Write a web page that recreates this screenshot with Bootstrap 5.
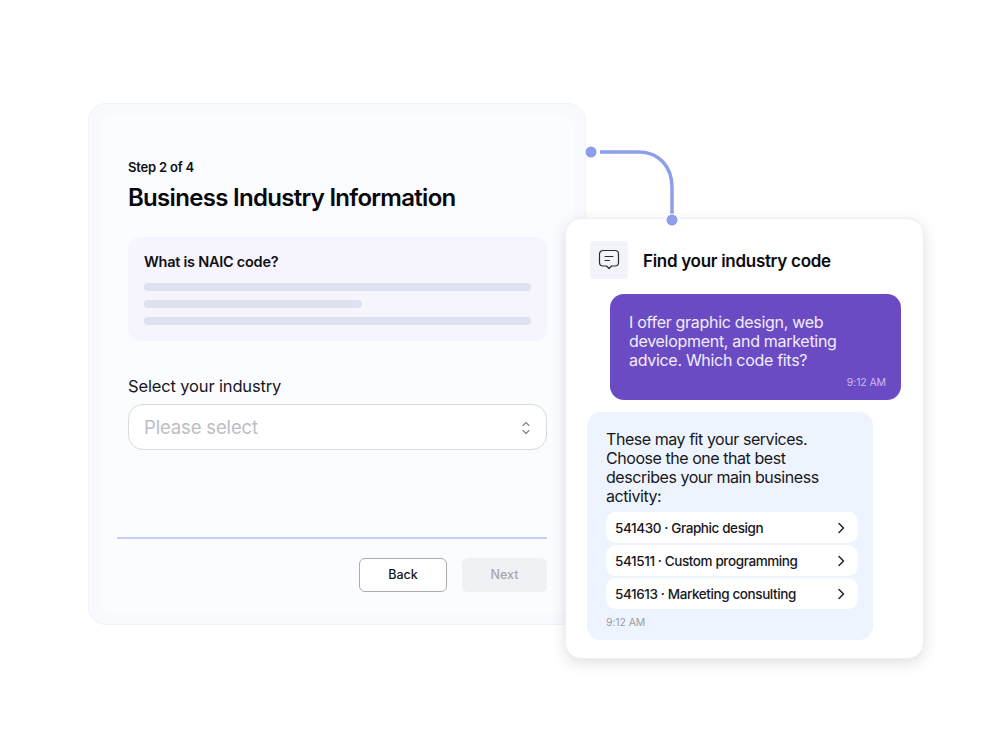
<!DOCTYPE html>
<html lang="en">
<head>
<meta charset="utf-8">
<title>Business Industry Information</title>
<link rel="stylesheet" href="https://cdn.jsdelivr.net/npm/bootstrap@5.3.0/dist/css/bootstrap.min.css">
<style>
html,body{height:749px;overflow:hidden;background:#fff}
body{font-family:Inter,"Noto Sans",sans-serif;color:#101014;padding:103px 0 0 88px}
.stage{position:relative;width:836px;height:555px}
.form-shell{width:498px;height:522px;background:#f9fafe;border:1px solid #f2f3f9;border-radius:18px;padding:11px}
.form-inner{height:498px;background:#fbfcff;border-radius:14px;padding:42px 27px 0 29px;display:flex;flex-direction:column}
.step-label{font-size:13px;font-weight:600;line-height:20px;letter-spacing:-.2px;margin:0 0 5px -1px}
.form-title{font-size:24px;font-weight:600;line-height:32px;letter-spacing:-.7px;margin:0 0 23px -1px;color:#08080c}
.info-box{height:104px;margin-left:-1px;background:#f6f5fd;border-radius:12px;padding:15px 16px}
.info-title{font-size:14.5px;font-weight:600;line-height:20px;letter-spacing:-.25px;margin-bottom:11px}
.skel{height:8px;border-radius:4px;background:#dde1f0;margin-bottom:9px}
.skel-short{width:218px}
.field-label{font-size:16.5px;line-height:24px;letter-spacing:-.15px;margin:33px 0 6px -1px;color:#17171c}
.select-box{height:46px;margin-left:-1px;background:#fff;border:1px solid #d9dade;border-radius:15px;padding:1px 15px 0 15px;font-size:18.5px;color:#bcbdc4;letter-spacing:-.15px}
.select-text{padding-top:1px}
.rule-line{height:2px;background:#c9cef3;margin:87px 0 19px -12px}
.action-row{column-gap:15px}
.btn-back,.btn-next{height:34px;width:88px;font-size:12.5px;font-weight:500;padding:1px 0 0;border-radius:6px}
.btn-back{border:1px solid #a9abb0;background:#fff;color:#17171c}
.btn-next{width:85px;border:0;background:#f0f1f5;color:#a6a8ae}
.connector{position:absolute;left:496px;top:40px}
.conn-end{position:absolute;left:99px;top:-6px}
.chat-win{position:absolute;left:477px;top:115px;width:359px;height:441px;background:#fff;border:1px solid #eceef8;border-radius:16px;box-shadow:0 4px 14px rgba(60,64,90,.16);padding:22px 22px 0 21px}
.chat-icon{width:38px;height:38px;margin-left:3px;background:#f2f3fb;border-radius:4px}
.chat-title{font-size:17px;font-weight:600;letter-spacing:-.3px;color:#0c0c10;margin-left:15px;padding-top:4px}
.bubble-out{width:291px;height:106px;margin:15px 0 12px 23px;background:#6b4bc4;border-radius:14px;color:#f1edfb;padding:19px 15px 0 19px;font-size:16px;line-height:19px;letter-spacing:-.3px}
.stamp-out{font-size:10.5px;line-height:14px;text-align:right;color:#c9bcec;margin-top:6px;letter-spacing:-.1px}
.bubble-in{width:286px;height:228px;background:#eef4fd;border-radius:14px;padding:18px 15px 0 19px;font-size:16px;line-height:19px;letter-spacing:-.45px;color:#17171c}
.opt-row{height:31px;background:#fff;border-radius:10px;padding:1px 13px 0 9px;font-size:13.5px;font-weight:500;letter-spacing:-.4px;margin-bottom:2px}
.opt-list{margin-top:6px}
.stamp-in{font-size:10.5px;line-height:14px;color:#9a9ca6;margin-top:7px;letter-spacing:-.1px}
</style>
</head>
<body>
<main class="stage">
  <section class="form-shell">
    <div class="form-inner">
      <p class="step-label">Step 2 of 4</p>
      <h1 class="form-title">Business Industry Information</h1>
      <div class="info-box">
        <div class="info-title">What is NAIC code?</div>
        <div class="skel"></div>
        <div class="skel skel-short"></div>
        <div class="skel"></div>
      </div>
      <div class="field-label">Select your industry</div>
      <div class="select-box d-flex align-items-center justify-content-between">
        <span class="select-text">Please select</span>
        <svg width="10" height="14" viewBox="0 0 10 14" fill="none" stroke="#85878e" stroke-width="1.200" stroke-linecap="round" stroke-linejoin="round"><path d="M2 4.500 5 1.500 8 4.500M2 9.500 5 12.500 8 9.500"/></svg>
      </div>
      <div class="rule-line"></div>
      <div class="d-flex justify-content-end action-row">
        <button type="button" class="btn btn-back">Back</button>
        <button type="button" class="btn btn-next">Next</button>
      </div>
    </div>
  </section>

  <svg class="connector" width="100" height="90" viewBox="0 0 100 90" fill="none">
    <path d="M16 9H55C75 9 88 24 88 44V72" stroke="#8d9eea" stroke-width="3.500"/>
    <circle cx="7" cy="9" r="6.500" fill="#fff"/>
    <circle cx="7" cy="9" r="5.500" fill="#8d9eea"/>
  </svg>

  <section class="chat-win">
    <div class="d-flex align-items-center">
      <div class="chat-icon d-flex align-items-center justify-content-center">
        <svg width="22" height="22" viewBox="0 0 22 22" fill="none" stroke="#2b2c33" stroke-width="1.200" stroke-linecap="round" stroke-linejoin="round"><path d="M5 1.500H17A3.500 3.500 0 0 1 20.500 5V13.500A3.500 3.500 0 0 1 17 17H13.500L11 19.500 8.500 17H5A3.500 3.500 0 0 1 1.500 13.500V5A3.500 3.500 0 0 1 5 1.500Z"/><path d="M7 7.500H15M7 11.500H11.500"/></svg>
      </div>
      <div class="chat-title">Find your industry code</div>
    </div>
    <div class="bubble-out">
      I offer graphic design, web development, and marketing advice. Which code fits?
      <div class="stamp-out">9:12 AM</div>
    </div>
    <div class="bubble-in">
      These may fit your services. Choose the one that best describes your main business activity:
      <div class="opt-list">
        <div class="opt-row d-flex align-items-center justify-content-between"><span>541430 · Graphic design</span><svg width="8" height="12" viewBox="0 0 8 12" fill="none" stroke="#22232a" stroke-width="1.500" stroke-linecap="round" stroke-linejoin="round"><path d="M2 1.500 6.500 6 2 10.500"/></svg></div>
        <div class="opt-row d-flex align-items-center justify-content-between"><span>541511 · Custom programming</span><svg width="8" height="12" viewBox="0 0 8 12" fill="none" stroke="#22232a" stroke-width="1.500" stroke-linecap="round" stroke-linejoin="round"><path d="M2 1.500 6.500 6 2 10.500"/></svg></div>
        <div class="opt-row d-flex align-items-center justify-content-between"><span>541613 · Marketing consulting</span><svg width="8" height="12" viewBox="0 0 8 12" fill="none" stroke="#22232a" stroke-width="1.500" stroke-linecap="round" stroke-linejoin="round"><path d="M2 1.500 6.500 6 2 10.500"/></svg></div>
      </div>
      <div class="stamp-in">9:12 AM</div>
    </div>
    <svg class="conn-end" width="14" height="14" viewBox="0 0 14 14"><circle cx="7" cy="7" r="6.500" fill="#fff"/><circle cx="7" cy="7" r="5.500" fill="#8d9eea"/></svg>
  </section>
</main>
</body>
</html>
